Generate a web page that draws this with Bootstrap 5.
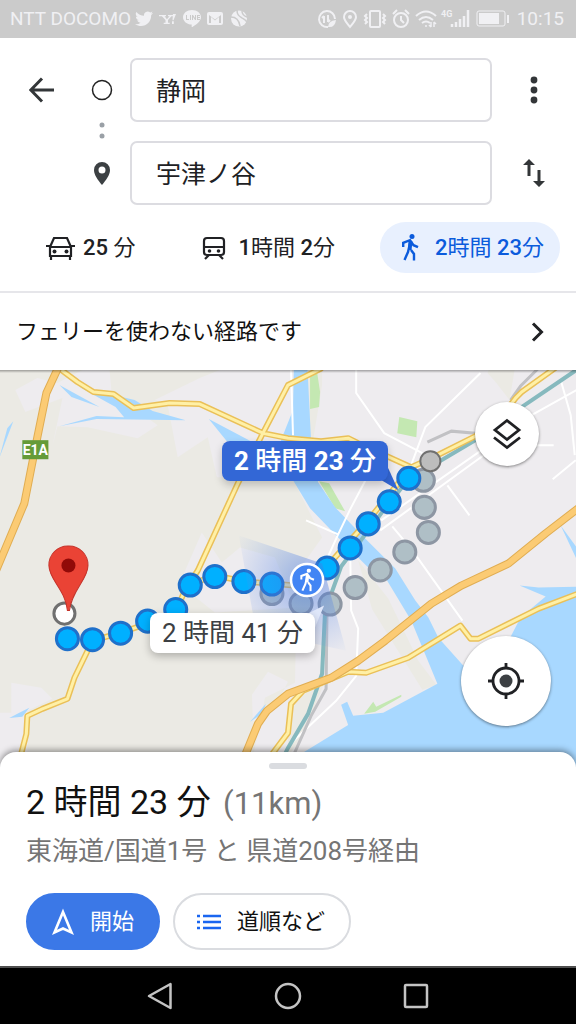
<!DOCTYPE html>
<html lang="ja">
<head>
<meta charset="utf-8">
<meta name="viewport" content="width=device-width, initial-scale=1">
<title>静岡 から 宇津ノ谷</title>
<link href="https://cdn.jsdelivr.net/npm/bootstrap@5.3.0/dist/css/bootstrap.min.css" rel="stylesheet">
<style>
  body { font-family: Roboto, "Noto Sans CJK JP", sans-serif; color: #202124; background: #fff; }
  svg { display: block; flex-shrink: 0; }
  .status { height: 38px; background: #cbcbcb; color: #f0f0f3; font-size: 19px; line-height: 38px; padding: 0 12px 0 10px; }
  .fields { display: grid; grid-template-columns: 84px 36px 1fr 84px; row-gap: 19px; padding-top: 20px; }
  .fields > * { justify-self: center; align-self: center; }
  .place { justify-self: stretch; height: 64px; margin-left: 10px; width: calc(100% - 10px); padding: 0 24px 2px; font-size: 25px; color: #202124; border: 2px solid #dcdce1; border-radius: 7px; }
  .stop-cell { position: relative; }
  .stop-dots { position: absolute; top: 42px; left: 50%; transform: translateX(-50%); }
  .goal-pin { grid-column: 2; }
  .plain { border: 0; background: none; padding: 0; color: #333638; }
  .modes { padding: 17px 16px 18px 24px; border-bottom: 2px solid #e6e6ea; }
  .mode { height: 51px; padding: 0 16px 0 22px; border: 0; border-radius: 26px; background: none; font-size: 22px; color: #202124; }
  .mode b { font-weight: 500; }
  .mode.chosen { background: #e8f0fe; color: #0b5bdc; }
  .notice { height: 77px; padding: 0 30px 0 16px; font-size: 22px; color: #111; text-decoration: none; }
  .map { position: relative; flex: 1 0 396px; min-height: 396px; }
  .map > .canvas { position: absolute; inset: 0; width: 100%; height: 100%; }
  .map-shade { position: absolute; inset: 0 0 auto; height: 3px; background: linear-gradient(#0005, #0000); }
  .round { position: absolute; border: 0; border-radius: 50%; background: #fff; color: #202124; box-shadow: 0 1px 3px #0007; padding: 0; }
  .layers { width: 64px; height: 64px; right: 37px; top: 32px; }
  .locate { width: 90px; height: 90px; right: 25px; top: 266px; }
  .route { position: absolute; border: 0; padding: 0; height: 40px; border-radius: 8px; font-size: 26px; line-height: 36px; white-space: nowrap; }
  .fastest { left: 222px; top: 71px; width: 166px; background: #3367d6; color: #fff; font-weight: 500; box-shadow: 0 4px 8px #0003; }
  .fastest b { font-weight: 700; }
  .slower { left: 150px; top: 243px; width: 165px; background: #fff; color: #3c4043; box-shadow: 0 3px 8px #0004; }
  .sheet { position: relative; margin-top: -15px; padding: 11px 26px 16px; background: #fff; border-radius: 16px 16px 0 0; box-shadow: 0 -2px 6px #0006; }
  .grip { width: 38px; height: 6px; border-radius: 3px; background: #dadce0; margin: 0 auto 8px; }
  .total { font-size: 34px; line-height: 50px; margin: 0; font-weight: 400; color: #111; }
  .far { font-size: 31px; color: #757575; margin-left: 4px; }
  .via { font-size: 26px; line-height: 36px; margin: 4px 0 24px; color: #757575; }
  .actions { gap: 13px; }
  .pill { height: 57px; border-radius: 29px; font-size: 22px; padding: 0 24px 0 22px; border: 2px solid #dadce0; background: #fff; color: #111; }
  .pill.go { background: #3b78e7; border-color: #3b78e7; color: #fff; padding: 0 24px; }
  .keys { height: 58px; background: #000; border-top: 2px solid #555; padding: 0 147px; }
  .keys .plain { color: #c4c4c4; }
</style>
</head>
<body class="d-flex flex-column min-vh-100">

<header>
  <div class="status d-flex align-items-center justify-content-between">
    <div class="d-flex align-items-center">
      <span>NTT DOCOMO</span>
      <svg class="ms-1" width="114" height="20" viewBox="0 0 114 20" fill="currentColor">
        <path d="M18 4c-.6.3-1.300.5-2 .6.7-.5 1.200-1.200 1.500-2-.7.4-1.500.7-2.300.9A3.700 3.700 0 0 0 9 6.800C6 6.700 3.200 5.200 1.400 3a3.700 3.700 0 0 0 1.100 4.900c-.6 0-1.100-.2-1.600-.5 0 1.800 1.200 3.300 2.900 3.700-.5.2-1.100.2-1.600.1.500 1.400 1.800 2.500 3.400 2.500A7.500 7.500 0 0 1 0 15.200C8 20 16.300 14.500 16.200 6 17 5.500 17.600 4.800 18 4Z"/>
        <path d="M24 6h7v1.300h-1.400l2.300 2.900 2.700-2.900H33V6h5v1.300h-1.500L33 11v2.700h1.700V15h-6v-1.300h1.800V11l-3.600-3.700H24ZM38 5h3l-2.500 6.300h-1ZM37 12.300h1.800V15H37Z"/>
        <path fill-rule="evenodd" d="M57 1c5 0 9 3.200 9 7.200 0 3.800-4.800 7.500-8.600 9.800-.9.500-.8-.6-.7-2.500C52 15.500 48 12.300 48 8.200 48 4.200 52 1 57 1Zm-6 5v5h3v-1h-2V6Zm4 0v5h1V6Zm2 0v5h1V8l2 3h1V6h-1v3l-2-3Zm5 0v5h3v-1h-2V9h2V8h-2V7h2V6Z"/>
        <path fill-rule="evenodd" d="M74 3h12q2 0 2 2v9q0 2-2 2H74q-2 0-2-2V5q0-2 2-2Zm0 3v8h2V8l4 3.500L84 8v6h2V6l-6 4.500Z"/>
        <circle cx="104" cy="9.500" r="8"/><path d="M102 1c0 5 2 6 5 8s5 3 5 5M96 8c5 0 8 3 9 9M107 2c0 3 2 5 5 6" fill="none" stroke="#cbcbcb" stroke-width="1.500"/>
      </svg>
    </div>
    <div class="d-flex align-items-center">
      <svg class="me-2" width="192" height="24" viewBox="0 0 192 24" fill="none" stroke="currentColor" stroke-width="2">
        <path d="M18 12a8 8 0 1 0-7 8M7 9l-2 2m2-2v7M11 8v7m0 0 2-2"/><path d="M11 20q0-6 8-7-1 8-8 7Z" fill="currentColor" stroke="none"/>
        <path d="M33 20c-4-5-6-7-6-10a6 6 0 0 1 12 0c0 3-2 5-6 10Z"/><circle cx="33" cy="10" r="2" fill="currentColor" stroke="none"/>
        <rect x="53" y="4" width="10" height="16" rx="1"/><path d="m50 7-2 2 2 2-2 2 2 2-2 2M66 7l2 2-2 2 2 2-2 2 2 2" stroke-width="2"/>
        <circle cx="84" cy="13" r="7"/><path d="M84 9v4l3 3M76 7l4-4m12 4-4-4"/>
        <path d="M99 9q10-9 20 0M102 13q7-6 14 0M105 16q4-3 8 0"/><path d="M109 20v-2M114 15v5m0 0-2-2m5 2v-5m0 0 2 2" stroke-width="1.500"/>
        <path d="M135 20v-3M139 20v-5M143 20v-8M147 20V9M151 20V3" stroke-width="2.500"/>
        <text x="124" y="10" font-size="9" font-weight="700" fill="currentColor" stroke="none">4G</text>
        <rect x="160" y="4" width="28" height="15" rx="2" stroke-width="1"/><rect x="162" y="6" width="20" height="11" fill="currentColor" stroke="none"/><path d="M191 8v8"/>
      </svg>
      <span>10:15</span>
    </div>
  </div>

  <div class="fields">
    <button class="plain" aria-label="戻る"><svg width="26" height="26" viewBox="0 0 26 26" fill="none" stroke="currentColor" stroke-width="3"><path d="M25 13H3M13 1.500 1.800 13 13 24.500"/></svg></button>
    <div class="stop-cell">
      <svg width="22" height="22" viewBox="0 0 22 22" fill="none" stroke="#222" stroke-width="1.500"><circle cx="11" cy="11" r="9.500"/></svg>
      <svg class="stop-dots" width="6" height="18" viewBox="0 0 6 18" fill="#9aa0a6"><circle cx="3" cy="4" r="2.500"/><circle cx="3" cy="15" r="2.500"/></svg>
    </div>
    <input class="place" type="text" value="静岡" aria-label="出発地">
    <button class="plain" aria-label="メニュー"><svg width="8" height="28" viewBox="0 0 8 28" fill="currentColor"><circle cx="4" cy="4" r="3.400"/><circle cx="4" cy="14" r="3.400"/><circle cx="4" cy="24" r="3.400"/></svg></button>
    <svg class="goal-pin" width="16" height="23" viewBox="0 0 16 23"><path fill="#3c4043" fill-rule="evenodd" d="M8 0a8 8 0 0 1 8 8c0 5-4 10-8 15C4 18 0 13 0 8a8 8 0 0 1 8-8Zm0 4.500a3.500 3.500 0 1 0 0 7 3.500 3.500 0 0 0 0-7Z"/></svg>
    <input class="place" type="text" value="宇津ノ谷" aria-label="目的地">
    <button class="plain" aria-label="出発地と目的地を入れ替え"><svg width="22" height="28" viewBox="0 0 22 28" fill="currentColor"><path d="M6 0 0 6h4.500v11h3V6H12ZM16 28l6-6h-4.500V11h-3v11H10Z"/></svg></button>
  </div>

  <div class="modes d-flex justify-content-between">
    <button class="mode d-flex align-items-center">
      <svg class="me-2" width="29" height="24" viewBox="0 0 29 24" fill="none" stroke="currentColor" stroke-width="2.200"><path d="M4 11 8 2h13l4 9v9H4ZM4 11h21M0 10h5m19 0h5M5 20v4m19-4v4"/><circle cx="8.500" cy="15.500" r="2" fill="currentColor" stroke="none"/><circle cx="20.500" cy="15.500" r="2" fill="currentColor" stroke="none"/></svg>
      <span><b>25</b> 分</span></button>
    <button class="mode d-flex align-items-center">
      <svg class="me-2" width="28" height="24" viewBox="0 0 28 24" fill="none" stroke="currentColor" stroke-width="2.200"><rect x="2" y="2" width="20" height="17" rx="3"/><path d="M2 11h20M7 19l-4 4m14-4 4 4"/><circle cx="7.500" cy="15" r="1.800" fill="currentColor" stroke="none"/><circle cx="16.500" cy="15" r="1.800" fill="currentColor" stroke="none"/></svg>
      <span><b>1</b>時間 <b>2</b>分</span></button>
    <button class="mode chosen d-flex align-items-center" aria-pressed="true">
      <svg class="me-3" width="17" height="27" viewBox="0 0 17 27"><g id="walker"><circle cx="10" cy="2.600" r="2.500" fill="currentColor"/><path d="M8.500 7 6 18 2.500 26M9 16l3 4v6.500M1.200 13V8.800L8 6.200l3.500 5 4.500 2" fill="none" stroke="currentColor" stroke-width="2.400"/><path d="m6.500 7 4 .5-1 9-3.500-1Z" fill="currentColor"/></g></svg>
      <span><b>2</b>時間 <b>23</b>分</span></button>
  </div>
</header>

<a class="notice d-flex align-items-center justify-content-between" href="#route">
  <span>フェリーを使わない経路です</span>
  <svg width="16" height="20" viewBox="0 0 16 20" fill="none" stroke="#202124" stroke-width="3"><path d="m3 1.500 8.500 8.500L3 18.500"/></svg>
</a>

<main class="map overflow-hidden">
  <svg class="canvas" viewBox="0 370 576 396" preserveAspectRatio="xMidYMid slice">
    <defs><radialGradient id="beam" gradientUnits="userSpaceOnUse" cx="307" cy="580" r="84"><stop offset="0" stop-color="#3b6fe0" stop-opacity=".5"/><stop offset="1" stop-color="#6a98ee" stop-opacity="0"/></radialGradient></defs>
    <rect y="360" width="576" height="420" fill="#ebeae4"/>
    <!-- built-up areas -->
    <path fill="#eeecef" d="M576 360H245L200 378 155 400l13 5 10 52 30-20 9 40 75 0 30 60-25 35-2 110-30 15-12 60H576ZM83 370h27l2 22 46 33-20 13-50-11-30-1-5 20 10-48-37 14-10-22 22-12 20 5ZM202 532l20 30 18-15 35 10 20 50-80 5-25-20-12-5ZM12 682l30 5 11 11-25 12 0 56H0v-54h12ZM252 694l16-23 20 10-10 20-25 20Z"/>
    <path fill="#ebeae4" d="m487 373 8 9 14 18 5-30-25-2ZM308 370h14l0 15-9 55-5-10ZM358 560l30 38 30 62 18 24-14 5-50-80ZM288 700l35-15-20 50-15 20Z"/>
    <!-- parks -->
    <path fill="#c4e8b2" d="m310 372 7 0 3 20-1 15-9 2ZM399 417l18 4-1 16-19-4ZM319 481l10 2 16 28-10-3ZM364 713l9-12 3 5 25-12v2l-26 15Z"/>
    <!-- river and sea -->
    <path fill="#a8d8ff" d="M294 360h13l4 80 7 42 17 25 25 26 35 35 20 32 13 17 10 20 25 28 45-25 12-23 25-21-26-11 19 2 45-1 24-10V780H290l14-29 44-27-7-20 6-3 6 14 30-3 54-29-26-63-26-43-17-10-30-30-28-29-17-28-12-40 12-30ZM80 387l55 13 18 11 33 9-60-1-10-12ZM60 385l40 22-28-10ZM60 426l37-10 92 4-92-1ZM209 419l42 22-24 0ZM0 458l8-30 6-7ZM10 717l10-5 10-5-7 9ZM250 721l8-9 8-9-4 10ZM560 525l16 22v12Z"/>
    <!-- streets -->
    <g fill="none" stroke="#fff" stroke-width="2">
      <path d="M356 365v28l28 40 38 20M480 373l-55 54-15 40M291 370l2 65M560 380l10 35 4 40M576 390l-45 25-150 105M552 479l23-19M490 450l-110 80M447 485l22 30M306 520l32 14 12-25 20-38M338 534l-10 22M350 550l1 60 7 18-2 47-20 25-48 45M392 526l20 24 50 70M553 445h-20"/>
    </g>
    <path fill="none" stroke="#c1c1c4" stroke-width="3" d="m427 442 24-11 35 3M510 400l10-14 22-22M327 600l-1 88-15 27-20 45"/>
    <!-- railway -->
    <path fill="none" stroke="#86b9be" stroke-width="4" d="m580 367-59 40-46 33-34 20-40 28-20 25-40 53-16 44-3 63-14 40-20 34-10 20"/>
    <!-- yellow roads -->
    <g fill="none" stroke-linejoin="round">
      <path stroke="#eac058" stroke-width="6" d="M58 367 78 382 94 392 114 394 134 408 170 403 200 404 263 433 288 438 321 441 348 438 358 443 411 467 431 458 475 436 500 418 515 398 521 392 560 364M322 368 288 385 263 433 238 483 198 570 185 590 175 614 121 632 93 640 75 677 68 698 43 708 28 715 27 733 20 760M190 584 215 575 245 581 307 586 325 568 368 520 411 467M270 756 288 732 291 703 303 690 348 671 366 672 408 657 460 625 470 638 478 638 538 608 580 592"/>
      <path stroke="#fff0a6" stroke-width="3" d="M58 367 78 382 94 392 114 394 134 408 170 403 200 404 263 433 288 438 321 441 348 438 358 443 411 467 431 458 475 436 500 418 515 398 521 392 560 364M322 368 288 385 263 433 238 483 198 570 185 590 175 614 121 632 93 640 75 677 68 698 43 708 28 715 27 733 20 760M190 584 215 575 245 581 307 586 325 568 368 520 411 467M270 756 288 732 291 703 303 690 348 671 366 672 408 657 460 625 470 638 478 638 538 608 580 592"/>
    </g>
    <!-- expressways -->
    <g fill="none" stroke-linejoin="round">
      <path stroke="#e0ad52" stroke-width="8" d="M60 365 47 393 38 437 25 503 -4 572M580 506 545 533 508 563 461 585 431 603 385 640 358 660 331 677 288 693 267 710 258 723 242 762"/>
      <path stroke="#fbcb74" stroke-width="6" d="M60 365 47 393 38 437 25 503 -4 572M580 506 545 533 508 563 461 585 431 603 385 640 358 660 331 677 288 693 267 710 258 723 242 762"/>
    </g>
    <rect x="23" y="440" width="26" height="19" fill="#659b38"/>
    <text x="36" y="455" text-anchor="middle" font-size="14" font-weight="700" fill="#fff">E1A</text>
    <!-- slower route -->
    <g fill="#afbfc6" stroke="#8d96a3" stroke-width="3">
      <circle cx="423" cy="480" r="11"/><circle cx="424" cy="507" r="11"/><circle cx="428" cy="532" r="11"/><circle cx="404.500" cy="551.500" r="11"/><circle cx="380" cy="569.500" r="11"/><circle cx="355" cy="587" r="11"/><circle cx="330" cy="603.500" r="11"/><circle cx="301" cy="603" r="11"/><circle cx="272" cy="593" r="11"/>
    </g>
    <!-- fastest route -->
    <g fill="#00b0ff" stroke="#1f70ca" stroke-width="3">
      <circle cx="408.500" cy="478" r="11"/><circle cx="389" cy="501.500" r="11"/><circle cx="368" cy="523.500" r="11"/><circle cx="350" cy="547.500" r="11"/><circle cx="327" cy="567.500" r="11"/><circle cx="272" cy="583.500" r="11"/><circle cx="244" cy="581" r="11"/><circle cx="215" cy="576" r="11"/><circle cx="190.500" cy="584.500" r="11"/><circle cx="176" cy="609" r="11"/><circle cx="148" cy="620.500" r="11"/><circle cx="121" cy="632.500" r="11"/><circle cx="93" cy="639" r="11"/><circle cx="68" cy="638" r="11"/>
    </g>
    <circle cx="430" cy="461" r="10" fill="#bdbdbd" stroke="#707070" stroke-width="2"/>
    <path fill="url(#beam)" d="m239 535 83 28 24 87-90-20Z"/>
    <path fill="#dfe7fa" d="m302 616 22-11-10 24Z"/>
    <path fill="#3367d6" d="M378 478 388 468 398 490Z"/>
    <circle cx="65" cy="613" r="10.500" fill="#fff" stroke="#707070" stroke-width="3"/>
    <path fill="#ea4335" stroke="#c5332a" d="M69 545.500a19 19 0 0 1 19.500 19.500c0 14-16 24-18.500 45h-2c-2-21-18.500-31-18.500-45A19 19 0 0 1 69 545.500Z"/><circle cx="69" cy="565" r="7" fill="#910a08"/>
    <circle cx="307" cy="579.500" r="16" fill="#4285f4" stroke="#fff" stroke-width="2.500"/>
    <svg x="300" y="568" width="15" height="23" viewBox="0 0 17 27" color="#fff"><use href="#walker"/></svg>
  </svg>
  <div class="map-shade"></div>
  <button class="route fastest"><b>2</b> 時間 <b>23</b> 分</button>
  <button class="route slower">2 時間 41 分</button>
  <button class="round layers d-flex align-items-center justify-content-center" aria-label="レイヤ"><svg width="30" height="32" viewBox="0 0 30 32" fill="none" stroke="currentColor" stroke-width="2.800"><path d="m15 2.500 12 9.500-12 9.500L3 12ZM2 19.500l13 10 13-10"/></svg></button>
  <button class="round locate d-flex align-items-center justify-content-center" aria-label="現在地"><svg width="36" height="36" viewBox="0 0 36 36" fill="none" stroke="currentColor" stroke-width="2.800"><circle cx="18" cy="18" r="13"/><circle cx="18" cy="18" r="6.500" fill="#3c4043" stroke="none"/><path d="M18 0v6m0 24v6M0 18h6m24 0h6"/></svg></button>
</main>

<section class="sheet" id="route">
  <div class="grip"></div>
  <h1 class="total">2 時間 23 分 <span class="far">(11km)</span></h1>
  <p class="via">東海道/国道1号 と 県道208号経由</p>
  <div class="actions d-flex">
    <button class="pill go d-flex align-items-center"><svg class="me-3" width="22" height="28" viewBox="0 0 22 28" fill="none" stroke="currentColor" stroke-width="2.600"><path d="m11 4 8.500 20.500L11 20.500 2.500 24.500Z"/></svg><span>開始</span></button>
    <button class="pill d-flex align-items-center"><svg class="me-3" width="24" height="16" viewBox="0 0 24 16" fill="none" stroke="#1a66f0" stroke-width="2.500"><path d="M6 2h18M6 8h18M6 14h18M0 2h3M0 8h3M0 14h3"/></svg><span>道順など</span></button>
  </div>
</section>

<nav class="keys d-flex align-items-center justify-content-between">
  <button class="plain" aria-label="戻る"><svg width="26" height="28" viewBox="0 0 26 28" fill="none" stroke="currentColor" stroke-width="2.500" stroke-linejoin="round"><path d="M23.500 2v24L2 14Z"/></svg></button>
  <button class="plain" aria-label="ホーム"><svg width="28" height="28" viewBox="0 0 28 28" fill="none" stroke="currentColor" stroke-width="2.500"><circle cx="14" cy="14" r="12"/></svg></button>
  <button class="plain" aria-label="アプリ履歴"><svg width="26" height="26" viewBox="0 0 26 26" fill="none" stroke="currentColor" stroke-width="2.500"><rect x="2" y="2" width="22" height="22" rx="1"/></svg></button>
</nav>
<script src="https://cdn.jsdelivr.net/npm/bootstrap@5.3.0/dist/js/bootstrap.bundle.min.js"></script>
</body>
</html>
